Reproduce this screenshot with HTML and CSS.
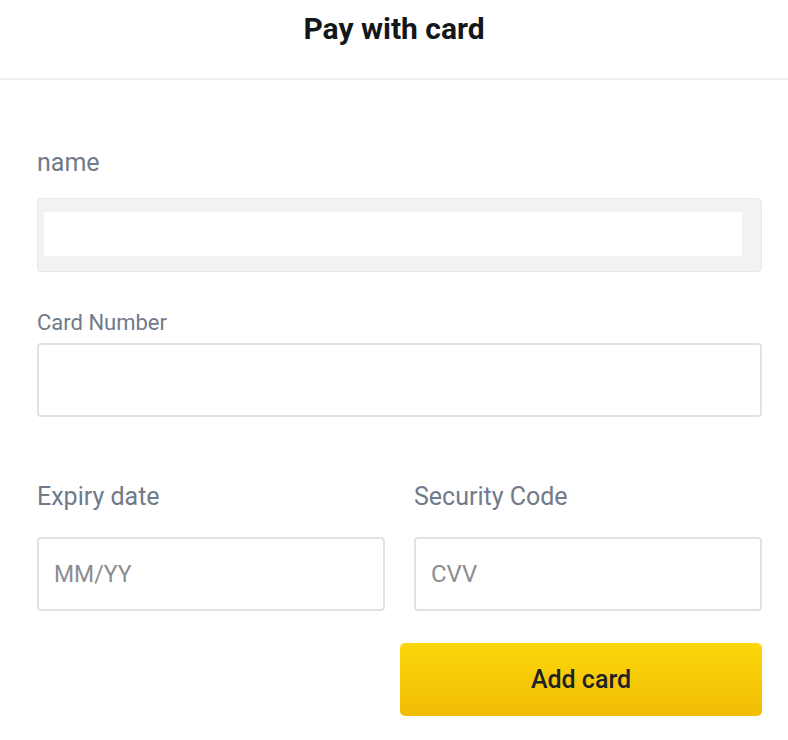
FILE: index.html
```html
<!DOCTYPE html>
<html lang="en">
<head>
  <meta charset="UTF-8">
  <meta name="viewport" content="width=device-width, initial-scale=1.0">
  <title>Pay with card</title>
  <link rel="stylesheet" href="styles.css">
</head>
<body>
  <!-- Header -->
  <header class="header">
    <h1>Pay with card</h1>
  </header>

  <form class="card-form">
    <!-- Nome -->
    <label class="label label-name" for="name">name</label>
    <div class="name-box">
      <input class="name-input" id="name" type="text">
    </div>

    <label class="label label-small" for="number">Card Number</label>
    <input class="field" id="number" type="text">

    <!-- Scadenza e CVV -->
    <div class="row">
      <div class="col">
        <label class="label" for="expiry">Expiry date</label>
        <input class="field" id="expiry" type="text" placeholder="MM/YY">
      </div>
      <div class="col">
        <label class="label" for="cvv">Security Code</label>
        <input class="field field-cvv" id="cvv" type="text" placeholder="CVV">
      </div>
    </div>

    <button class="btn-add" type="button">Add card</button>
  </form>
</body>
</html>
```

FILE: styles.css
```css
/* Reset base */
* {
  box-sizing: border-box;
  margin: 0;
  padding: 0;
}
body {
  font-family: Roboto, 'Liberation Sans', sans-serif;
  background: #fff;
  color: #1e2329;
}
/* Header */
.header {
  height: 80px;
  padding-top: 13px;
  border-bottom: 2px solid #eceef0;
  text-align: center;
}
.header h1 {
  font-size: 30px;
  line-height: 32px;
  font-weight: 700;
  color: #14171a;
}
/* Form */
.card-form {
  display: flex;
  flex-direction: column;
  padding: 71px 26px 0 37px;
}
.label {
  display: block;
  font-size: 25px;
  line-height: 24px;
  color: #707a8a;
}
.label-name {
  margin-bottom: 23px;
}
.label-small {
  font-size: 22px;
  line-height: 22px;
  margin-bottom: 9px;
}
/* Campo nome (riquadro grigio) */
.name-box {
  height: 74px;
  padding: 13px 19px 15px 6px;
  background: #f1f2f3;
  border: 1px solid #e6e8ea;
  border-radius: 4px;
  margin-bottom: 40px;
}
.name-input {
  display: block;
  width: 100%;
  height: 100%;
  border: none;
  background: #fff;
  outline: none;
}
.field {
  display: block;
  width: 100%;
  height: 74px;
  padding: 0 15px;
  border: 2px solid #e1e2e4;
  border-radius: 4px;
  font-family: inherit;
  font-size: 23px;
  color: #1e2329;
  outline: none;
}
.field-cvv {
  font-size: 24px;
}
.field::placeholder {
  color: #8a8d91;
}
.row {
  display: grid;
  grid-template-columns: 1fr 1fr;
  gap: 29px;
  margin-top: 68px;
}
.col .label {
  margin-bottom: 28px;
}
/* Pulsante */
.btn-add {
  align-self: flex-end;
  width: 362px;
  height: 73px;
  margin-top: 32px;
  border: none;
  border-radius: 5px;
  background: linear-gradient(180deg, #fcd70a 0%, #f1bd06 100%);
  font-family: inherit;
  font-size: 25px;
  font-weight: 500;
  color: #1e2329;
}
```
